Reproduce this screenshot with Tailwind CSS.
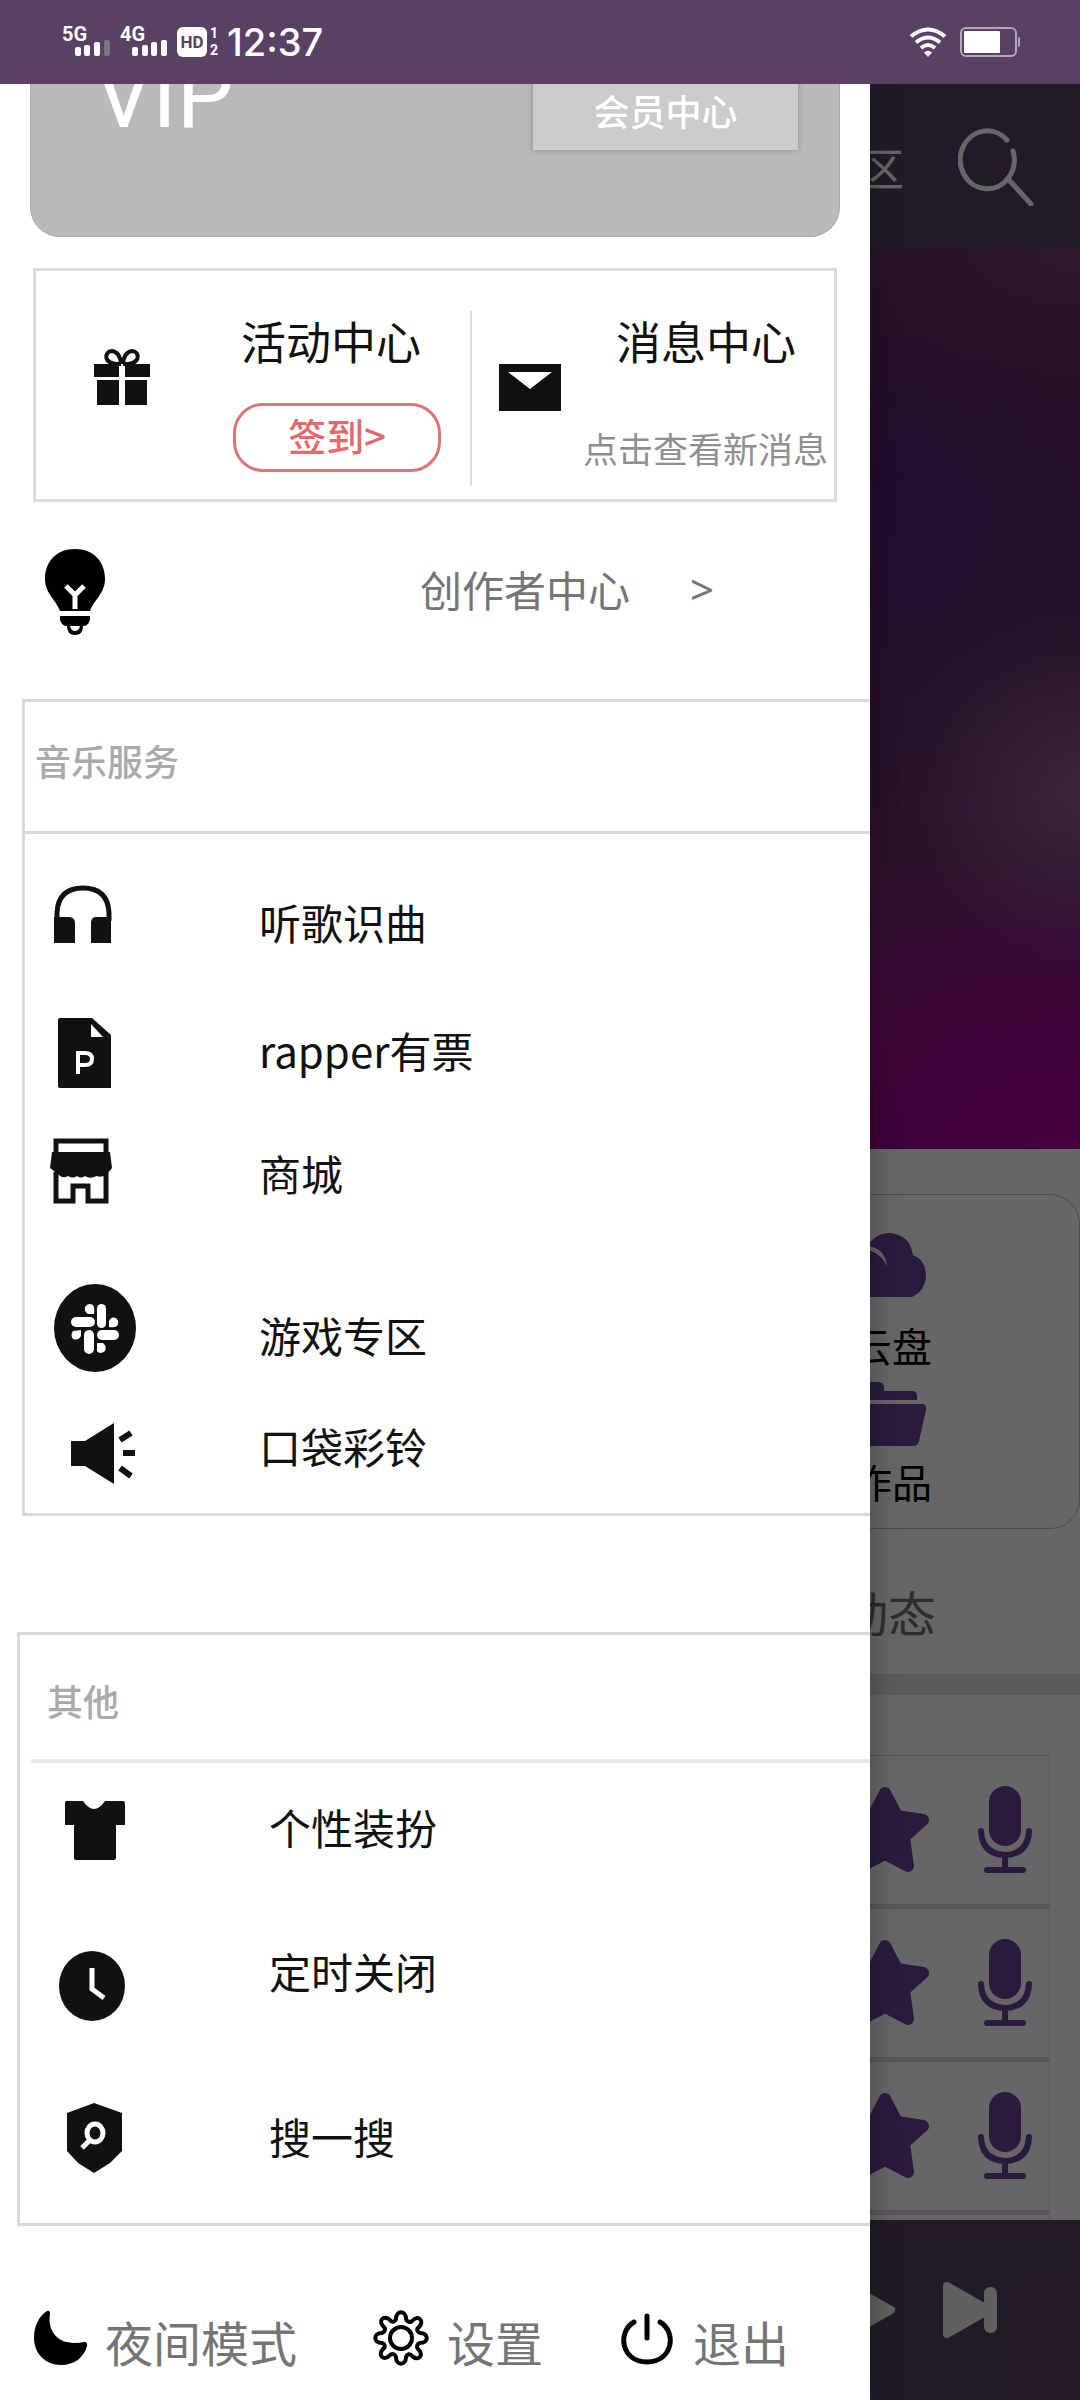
<!DOCTYPE html>
<html lang="zh-CN">
<head>
<meta charset="utf-8">
<meta name="viewport" content="width=device-width, initial-scale=1">
<title>音乐</title>
<script src="https://cdn.jsdelivr.net/npm/@tailwindcss/browser@4"></script>
</head>
<body class="min-h-screen flex flex-col bg-white font-['Noto_Sans_CJK_SC',sans-serif] text-[#111]">

<!-- system status bar -->
<header class="h-[84px] shrink-0 bg-[#594164] text-white flex items-center justify-between pl-[62px] pr-[60px] font-[Roboto,sans-serif]">
  <div class="flex items-center">
    <svg class="w-[58px] h-[40px]" viewBox="0 -1 58 40" fill="#fff" aria-label="5G">
      <text x="0" y="18" font-size="20" font-weight="700" font-family="Roboto">5G</text>
      <rect x="13" y="24" width="6" height="9" rx="2"/><rect x="22" y="22" width="6" height="11" rx="2"/><rect x="32" y="19" width="6" height="14" rx="2"/><rect x="42" y="17" width="6" height="16" rx="2" opacity=".25"/>
    </svg>
    <svg class="w-[57px] h-[40px]" viewBox="0 -1 57 40" fill="#fff" aria-label="4G">
      <text x="0" y="18" font-size="20" font-weight="700" font-family="Roboto">4G</text>
      <rect x="12" y="24" width="6" height="9" rx="2"/><rect x="22" y="22" width="6" height="11" rx="2"/><rect x="31" y="19" width="6" height="14" rx="2"/><rect x="41" y="17" width="6" height="16" rx="2"/>
    </svg>
    <span class="w-[30px] h-[30px] rounded-md bg-white text-[#594164] text-[17px] leading-[30px] font-bold text-center">HD</span>
    <span class="w-[20px] pl-[3px] text-[14px] leading-[17px] font-bold flex flex-col"><span>1</span><span>2</span></span>
    <time class="font-[Inter,sans-serif] font-medium text-[38px] leading-[40px]">12:37</time>
  </div>
  <div class="flex items-center gap-[14px]">
    <svg class="w-[36px] h-[30px]" viewBox="0 0 36 30" fill="none" stroke="#fff" stroke-width="4">
      <path d="M1 9.500Q18-4.500 35 9.500"/><path d="M6 15.500Q18 5.500 30 15.500"/><path d="M11 21Q18 15 25 21"/><path d="M14 25.500Q18 22 22 25.500L18 30Z" fill="#fff" stroke="none"/>
    </svg>
    <svg class="w-[60px] h-[30px]" viewBox="0 0 60 30">
      <rect x="1" y="1" width="55" height="28" rx="5" fill="none" stroke="#b5a5bd" stroke-width="2"/><rect x="4" y="4" width="36" height="22" rx="1" fill="#fff"/><path d="M58 10q2 0 2 2v6q0 2-2 2z" fill="#b5a5bd"/>
    </svg>
  </div>
</header>

<div class="grid flex-1 overflow-hidden">

  <!-- page under the drawer -->
  <main class="[grid-area:1/1] flex flex-col bg-white">
    <div class="h-[165px] bg-[#594164] flex items-center justify-end pr-[46px] gap-[54px] text-white">
      <a href="#" class="text-[44px] leading-[44px]">专区</a>
      <button aria-label="搜索"><svg class="w-[76px] h-[78px]" viewBox="-2 -1 76 78" fill="none" stroke="#fff" stroke-width="5" stroke-linecap="round"><path d="M47 11A27 29 0 1 0 53 22"/><path d="M49 51L71 75"/></svg></button>
    </div>
    <div class="h-[900px] bg-[radial-gradient(ellipse_190px_180px_at_100%_60%,rgba(165,110,170,0.75),transparent),radial-gradient(ellipse_180px_200px_at_84%_30%,rgba(75,30,150,0.4),transparent),radial-gradient(ellipse_260px_140px_at_100%_0%,rgba(140,85,140,0.5),transparent),radial-gradient(ellipse_300px_260px_at_100%_100%,rgba(200,0,185,0.6),transparent),linear-gradient(to_bottom,#60285f_0%,#5a2463_25%,#5c2a66_55%,#6a2a68_68%,#8a1a80_82%,#8c0080_100%)]"></div>

    <section class="mt-[45px] h-[335px] rounded-[30px] border border-[#bbb] flex flex-col items-end pt-[38px] pr-[147px] text-black">
      <a href="#" class="flex flex-col items-center">
        <svg class="w-[80px] h-[64px]" viewBox="0 0 80 64" fill="#6b419b"><path d="M18 64Q-4 60-4 40Q-4 24 12 20Q20 0 38 0Q58 2 61 22Q74 27 74 43Q73 58 60 64Z"/><path d="M8 14Q32 10 35 33Q28 18 10 16Z" fill="#fff"/></svg>
        <span class="mt-[28px] text-[40px] leading-[40px]">云盘</span>
      </a>
      <a href="#" class="mt-[17px] flex flex-col items-center">
        <svg class="w-[80px] h-[64px]" viewBox="0 0 80 64" fill="#6b419b"><path d="M0 18V5Q0 0 5 0H26Q32 0 32 6V9H60Q65 9 65 14V18Z"/><path d="M-10 22H70Q75 22 74 28L67 59Q66 64 61 64H-4Z"/></svg>
        <span class="mt-[15px] text-[40px] leading-[40px]">作品</span>
      </a>
    </section>

    <h2 class="mt-[58px] pr-[144px] text-right text-[48px] leading-[48px] text-[#707070]">动态</h2>
    <div class="mt-[39px] h-[21px] bg-[#e4e4e4]"></div>

    <ul class="mt-[60px] mr-[30px] flex-1 border border-b-0 border-[#dcdcdc]">
      <li class="h-[153px] border-b-[5px] border-[#dcdcdc] flex items-center justify-end gap-[48px] pr-[17px]">
        <svg class="w-[90px] h-[90px]" viewBox="0 0 90 90" fill="#6b419b" stroke="#6b419b" stroke-width="12" stroke-linejoin="round"><path d="M45 8L57 31L83 35L64 52L68 81L45 69L22 81L26 52L7 35L33 31Z"/></svg>
        <svg class="w-[54px] h-[90px]" viewBox="0 0 54 90" fill="none" stroke="#6b419b" stroke-width="6" stroke-linecap="round"><rect x="11" y="1" width="32" height="60" rx="16" fill="#6b419b" stroke="none"/><path d="M3 46Q4 69 27 70Q50 69 51 46M27 70V85M9 85H45"/></svg>
      </li>
      <li class="h-[153px] border-b-[5px] border-[#dcdcdc] flex items-center justify-end gap-[48px] pr-[17px]">
        <svg class="w-[90px] h-[90px]" viewBox="0 0 90 90" fill="#6b419b" stroke="#6b419b" stroke-width="12" stroke-linejoin="round"><path d="M45 8L57 31L83 35L64 52L68 81L45 69L22 81L26 52L7 35L33 31Z"/></svg>
        <svg class="w-[54px] h-[90px]" viewBox="0 0 54 90" fill="none" stroke="#6b419b" stroke-width="6" stroke-linecap="round"><rect x="11" y="1" width="32" height="60" rx="16" fill="#6b419b" stroke="none"/><path d="M3 46Q4 69 27 70Q50 69 51 46M27 70V85M9 85H45"/></svg>
      </li>
      <li class="h-[153px] border-b-[5px] border-[#dcdcdc] flex items-center justify-end gap-[48px] pr-[17px]">
        <svg class="w-[90px] h-[90px]" viewBox="0 0 90 90" fill="#6b419b" stroke="#6b419b" stroke-width="12" stroke-linejoin="round"><path d="M45 8L57 31L83 35L64 52L68 81L45 69L22 81L26 52L7 35L33 31Z"/></svg>
        <svg class="w-[54px] h-[90px]" viewBox="0 0 54 90" fill="none" stroke="#6b419b" stroke-width="6" stroke-linecap="round"><rect x="11" y="1" width="32" height="60" rx="16" fill="#6b419b" stroke="none"/><path d="M3 46Q4 69 27 70Q50 69 51 46M27 70V85M9 85H45"/></svg>
      </li>
    </ul>

    <!-- player bar -->
    <div class="h-[180px] bg-[#594164] flex items-center justify-end gap-[48px] pr-[83px]">
      <button aria-label="播放"><svg class="w-[54px] h-[60px]" viewBox="0 0 54 60" fill="#f0f0f0" stroke="#f0f0f0" stroke-width="8" stroke-linejoin="round"><path d="M4 4L50 30L4 56Z"/></svg></button>
      <button aria-label="下一首"><svg class="w-[54px] h-[60px]" viewBox="0 0 54 60" fill="#f0f0f0"><path d="M4 6L46 30L4 54Z" stroke="#f0f0f0" stroke-width="8" stroke-linejoin="round"/><rect x="41" y="7" width="13" height="46" rx="6"/></svg></button>
    </div>
  </main>

  <div class="[grid-area:1/1] bg-black/60"></div>

  <!-- drawer -->
  <aside class="[grid-area:1/1] mr-[210px] bg-white shadow-[4px_0_24px_rgba(0,0,0,0.25)] flex flex-col overflow-hidden">
    <section class="mx-[30px] h-[153px] rounded-b-[30px] border border-t-0 border-[#a9a9a9] bg-[#bababa] text-white flex justify-between items-start pl-[64px] pr-[41px]">
      <h1 class="-mt-[32px] font-[Roboto,sans-serif] text-[90px] leading-[90px]">VIP</h1>
      <button class="-mt-[12px] pb-[2px] w-[265px] h-[78px] bg-[#cbcbcb] text-[36px] leading-[36px] font-medium shadow-[0_0_6px_rgba(0,0,0,0.25)]">会员中心</button>
    </section>

    <section class="mt-[31px] ml-[33px] mr-[33px] h-[234px] border-[3px] border-[#dcdcdc] flex">
      <div class="w-[434px] flex pl-[56px] pt-[48px]">
        <svg class="w-[60px] h-[90px]" viewBox="0 -4 60 90" fill="#111"><path d="M2 41H27V54H2ZM33 41H58V54H33ZM5 57H27V82H5ZM33 57H55V82H33Z"/><path d="M29 41C10 42 12 28 20 28Q28 29 29 41M31 41C50 42 48 28 40 28Q32 29 31 41" fill="none" stroke="#111" stroke-width="4"/></svg>
        <div class="ml-[81px] flex flex-col">
          <h2 class="ml-[8px] text-[45px] leading-[44px]">活动中心</h2>
          <button class="mt-[40px] pb-[6px] w-[208px] h-[69px] rounded-[30px] border-[3px] border-[#dd7478] text-[#e2696c] text-[38px] leading-[38px] font-medium">签到&gt;</button>
        </div>
      </div>
      <div class="mt-[40px] mb-[14px] w-[2px] bg-[#ddd]"></div>
      <div class="flex-1 flex pl-[27px] pt-[48px]">
        <svg class="w-[62px] h-[94px]" viewBox="0 -4 62 94"><rect y="41" width="62" height="47" fill="#111"/><path d="M9 49H53L31 66Z" fill="#fff"/></svg>
        <div class="flex-1 flex flex-col items-end pr-[6px]">
          <h2 class="mr-[32px] text-[45px] leading-[44px]">消息中心</h2>
          <p class="mt-[67px] text-[35px] leading-[36px] text-[#8f8f8f]">点击查看新消息</p>
        </div>
      </div>
    </section>

    <a href="#" class="mt-[46px] h-[88px] flex items-center text-[#757575] text-[42px] leading-[42px]">
      <svg class="ml-[44px] w-[62px] h-[88px]" viewBox="0 0 62 88"><path d="M31 1C50 1 61 14 61 31C61 45 50 52 46 63H16C12 52 1 45 1 31C1 14 12 1 31 1Z" fill="#000"/><path d="M22 38L31 47L40 38M31 47V61" fill="none" stroke="#fff" stroke-width="5"/><path d="M16 68H46V72Q44 78 39 78Q39 87 31 87Q23 87 23 78Q18 78 16 72Z" fill="#000"/><path d="M26 78H36Q35 83 31 83Q27 83 26 78Z" fill="#fff"/></svg>
      <span class="ml-[314px] pb-[6px]">创作者中心</span><span class="ml-[60px] pb-[6px] font-['Noto_Sans',sans-serif]">&gt;</span>
    </a>

    <section class="mt-[63px] ml-[22px] h-[817px] border-[3px] border-r-0 border-[#d9d9d9] flex flex-col">
      <h3 class="h-[132px] pl-[10px] border-b-[3px] border-[#d9d9d9] text-[36px] leading-[116px] font-medium text-[#aaa]">音乐服务</h3>
      <ul class="mt-[34px] ml-[15px] text-[42px] leading-[42px]">
        <li><a href="#" class="flex items-center gap-[111px]">
          <svg class="size-[108px]" viewBox="0 -3 108 108"><path d="M17 50V42Q18 17 43 17Q68 17 69 42V50" fill="none" stroke="#111" stroke-width="5"/><path d="M14 46H30Q35 47 35 52V72H14ZM71 46H55Q51 47 51 52V72H71Z" fill="#111"/></svg>听歌识曲</a></li>
        <li class="mt-[20px]"><a href="#" class="flex items-center gap-[111px]">
          <svg class="size-[108px]" viewBox="0 -3 108 108"><path d="M20 19H52L71 36V89H20Q18 89 18 87V21Q18 19 20 19Z" fill="#111"/><path d="M51 25V38H63Z" fill="#fff"/><path d="M38 75V54H45Q52 54 52 60Q52 66 45 66H38" fill="none" stroke="#fff" stroke-width="4"/></svg>rapper有票</a></li>
        <li class="mt-[15px]"><a href="#" class="flex items-center gap-[111px]">
          <svg class="size-[108px]" viewBox="0 -3 108 108"><path d="M16 32V19H66V32M16 50V79H33V64H48V79H66V50" fill="none" stroke="#111" stroke-width="5"/><path d="M12 30H70L72 46L67 52Q62 56 57 54L54 55Q49 57 45 54Q41 57 37 54Q33 57 28 54Q23 57 19 53L10 46Z" fill="#111"/></svg>商城</a></li>
        <li class="mt-[54px]"><a href="#" class="flex items-center gap-[111px]">
          <svg class="size-[108px]" viewBox="0 -3 108 108"><ellipse cx="55" cy="44" rx="41" ry="44" fill="#111"/><g fill="#fff"><rect x="57" y="20" width="9" height="24" rx="4.500"/><rect x="31" y="33" width="24" height="10" rx="5"/><rect x="44" y="46" width="10" height="24" rx="5"/><rect x="57" y="46" width="22" height="10" rx="5"/><path d="M54 30H48Q44 28 45 23Q48 18 53 21Q55 24 54 30ZM69 43V37Q71 32 76 34Q80 37 77 42Q74 44 69 43ZM57 59H63Q67 62 65 67Q60 71 57 67ZM41 46V52Q38 57 33 55Q30 51 33 47Z"/></g></svg>游戏专区</a></li>
        <li class="mt-[3px]"><a href="#" class="flex items-center gap-[111px]">
          <svg class="size-[108px]" viewBox="0 -3 108 108"><path d="M31 46H45L74 28V89L45 71H31Z" fill="#111"/><path d="M80 45L91 38M83 58H95M80 73L91 81" stroke="#111" stroke-width="6"/></svg>口袋彩铃</a></li>
      </ul>
    </section>

    <section class="mt-[116px] ml-[17px] h-[594px] border-[3px] border-r-0 border-[#d9d9d9] flex flex-col">
      <h3 class="h-[128px] ml-[11px] pl-[16px] border-b-4 border-[#eaeaea] text-[36px] leading-[130px] font-medium text-[#aaa]">其他</h3>
      <ul class="mt-[10px] ml-[20px] text-[42px] leading-[42px]">
        <li><a href="#" class="flex items-center gap-[121px]">
          <svg class="size-[108px]" viewBox="0 -3 108 108"><path d="M26 25H43Q54 41 65 25H83Q85 25 85 28V49H76V82Q76 84 74 84H36Q34 84 34 82V49H25V28Q25 25 26 25Z" fill="#111"/></svg>个性装扮</a></li>
        <li class="mt-[36px]"><a href="#" class="flex items-center gap-[121px]">
          <svg class="size-[108px]" viewBox="0 -3 108 108"><ellipse cx="52" cy="66" rx="33" ry="35" fill="#111"/><path d="M52 48V69L64 78" fill="none" stroke="#fff" stroke-width="5"/></svg>定时关闭</a></li>
        <li class="mt-[57px]"><a href="#" class="flex items-center gap-[121px]">
          <svg class="size-[108px]" viewBox="0 -3 108 108"><path d="M54 18L82 28V66L70 78L54 88L38 78L27 66V28Z" fill="#111"/><ellipse cx="55" cy="48" rx="8" ry="9" fill="none" stroke="#fff" stroke-width="5"/><path d="M50 55L42 63" stroke="#fff" stroke-width="5"/></svg>搜一搜</a></li>
      </ul>
    </section>

    <nav class="mt-[84px] mb-[34px] flex items-center text-[#757575] text-[48px] leading-[48px]">
      <button class="ml-[33px] flex items-center gap-[16px]">
        <svg class="w-[56px] h-[56px]" viewBox="0 0 56 56"><path d="M14 1Q17 0 17 4C14 22 26 37 51 32Q55 32 54 36C51 47 42 55 28 55C12 55 1 43 1 28C1 16 6 6 14 1Z" fill="#000"/></svg><span class="pt-[6px]">夜间模式</span></button>
      <button class="ml-[76px] flex items-center gap-[18px]">
        <svg class="w-[56px] h-[56px]" viewBox="0 0 56 56" fill="none" stroke="#000" stroke-width="4" stroke-linejoin="round"><circle cx="28" cy="28" r="11"/><path d="M23 9C23 0 33 0 33 9C34 12 37 13 39 11C45 4 52 11 46 17C43 19 44 22 47 23C56 23 56 33 47 33C44 34 43 37 45 39C52 45 45 52 39 46C37 43 34 44 33 47C33 56 23 56 23 47C22 44 19 43 17 45C11 52 4 45 10 39C13 37 12 34 9 33C0 33 0 23 9 23C12 22 13 19 11 17C4 11 11 4 17 10C19 13 22 12 23 9Z"/></svg><span class="pt-[6px]">设置</span></button>
      <button class="ml-[76px] flex items-center gap-[18px]">
        <svg class="w-[56px] h-[56px]" viewBox="0 0 56 56" fill="none" stroke="#000" stroke-width="5" stroke-linecap="round"><path d="M28 6V28M15 12C-2 22 2 52 28 52C54 52 58 22 41 12"/></svg><span class="pt-[6px]">退出</span></button>
    </nav>
  </aside>
</div>
</body>
</html>
